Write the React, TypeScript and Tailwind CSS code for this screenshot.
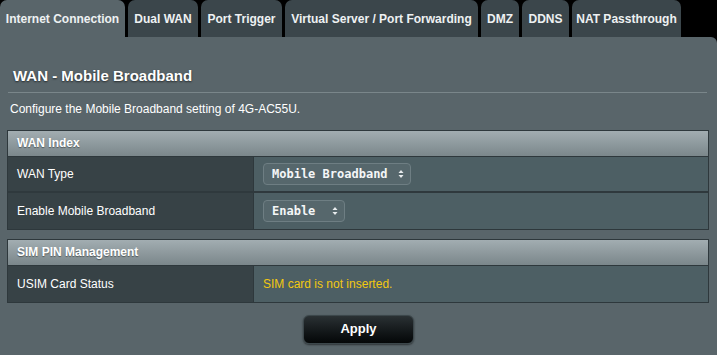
import React from "react";

const tabs = [
  { label: "Internet Connection", w: "w-[125px]", active: true },
  { label: "Dual WAN", w: "w-[70px]" },
  { label: "Port Trigger", w: "w-[81px]" },
  { label: "Virtual Server / Port Forwarding", w: "w-[193px]" },
  { label: "DMZ", w: "w-[38px]" },
  { label: "DDNS", w: "w-[47px]" },
  { label: "NAT Passthrough", w: "w-[109px]" },
];

function Arrows() {
  return (
    <svg width="6" height="10" viewBox="0 0 6 10" className="ml-2">
      <path d="M0.5 4 L3 1 L5.5 4 Z" fill="#e8ecee" />
      <path d="M0.5 6 L3 9 L5.5 6 Z" fill="#e8ecee" />
    </svg>
  );
}

function Select({ text, w }: { text: string; w: string }) {
  return (
    <div
      className={`${w} h-[22px] flex items-center justify-between pl-[8px] pr-[6px] rounded-[4px] border border-[#6e7e83] bg-[#56676c] text-[#f4f6f7] text-[12px] font-bold`}
      style={{ fontFamily: '"DejaVu Sans Mono", monospace' }}
    >
      <span>{text}</span>
      <Arrows />
    </div>
  );
}

function Header({ title }: { title: string }) {
  return (
    <div className="h-[26px] flex items-center pl-[9px] bg-gradient-to-b from-[#a2adb1] to-[#7b878b] text-white text-[12px] font-bold border-b border-[#2e383c] [text-shadow:0_1px_1px_rgba(0,0,0,0.4)]">
      {title}
    </div>
  );
}

function Row({ label, children, last }: { label: string; children: React.ReactNode; last?: boolean }) {
  return (
    <div className={`flex h-[36px] ${last ? "" : "border-b-[2px] border-[#2f393d]"}`}>
      <div className="w-[246px] shrink-0 bg-[#374246] border-r border-[#2e383c] flex items-center pl-[9px] text-white text-[12px]">
        {label}
      </div>
      <div className="flex-1 bg-[#4d5f64] flex items-center pl-[9px]">{children}</div>
    </div>
  );
}

export default function App() {
  return (
    <div
      className="w-[717px] h-[355px] bg-black overflow-hidden flex flex-col"
      style={{ fontFamily: '"Liberation Sans", Arial, sans-serif' }}
    >
      <div className="flex h-[37px] gap-[3px] shrink-0">
        {tabs.map((t) => (
          <div
            key={t.label}
            className={`${t.w} shrink-0 rounded-t-[7px] flex items-center justify-center text-[12px] font-bold text-[#eef1f2] ${
              t.active ? "bg-[#59656a]" : "bg-[#3b464b]"
            }`}
          >
            {t.label}
          </div>
        ))}
      </div>
      <div className="flex-1 bg-[#59656a] rounded-tr-[6px] px-[7px]">
        <div className="pt-[28px] pl-[6px] text-white text-[15px] font-bold [text-shadow:0_1px_2px_rgba(0,0,0,0.6)]">
          WAN - Mobile Broadband
        </div>
        <div className="mt-[4px] mx-[1px] h-px bg-[#7a868a] mr-[3px]" />
        <div className="mt-[7px] pl-[3px] text-white text-[12px]">Configure the Mobile Broadband setting of 4G-AC55U.</div>

        <div className="mt-[12px] w-[702px] border border-[#2e383c]">
          <Header title="WAN Index" />
          <Row label="WAN Type">
            <Select text="Mobile Broadband" w="w-[148px]" />
          </Row>
          <Row label="Enable Mobile Broadband" last>
            <Select text="Enable" w="w-[82px]" />
          </Row>
        </div>

        <div className="mt-[9px] w-[702px] border border-[#2e383c]">
          <Header title="SIM PIN Management" />
          <Row label="USIM Card Status" last>
            <span className="text-[#f2c811] text-[12px]">SIM card is not inserted.</span>
          </Row>
        </div>

        <div className="flex justify-center mt-[12px]">
          <div className="w-[111px] h-[29px] rounded-[6px] bg-gradient-to-b from-[#2a3134] to-[#050708] border border-[#3c474b] flex items-center justify-center text-white text-[13px] font-bold shadow-[0_1px_2px_rgba(0,0,0,0.5)]">
            Apply
          </div>
        </div>
      </div>
    </div>
  );
}
